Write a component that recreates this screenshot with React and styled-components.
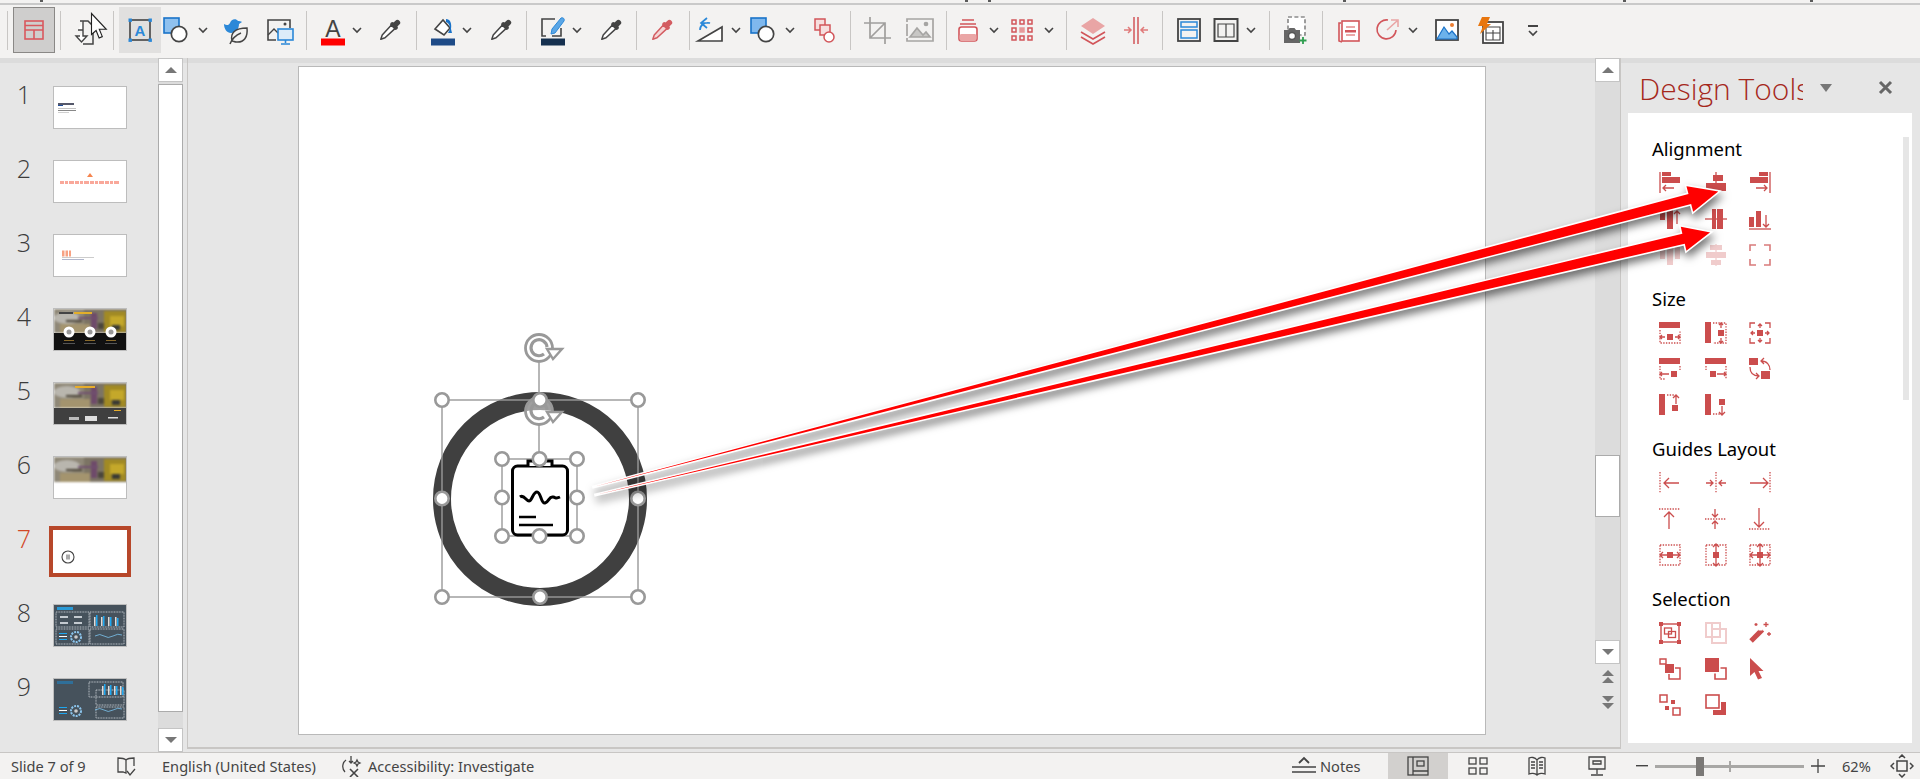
import React from "react";
import styled, { createGlobalStyle } from "styled-components";

const UI = `"Noto Sans", "Open Sans", "Liberation Sans", sans-serif`;

const Global = createGlobalStyle`
  html, body { margin: 0; padding: 0; background: #e6e6e6; }
  * { box-sizing: border-box; }
`;

const Page = styled.div`
  position: relative; width: 1920px; height: 779px; overflow: hidden;
  display: flex; flex-direction: column; font-family: ${UI}; background: #e6e6e6;
`;
const TopStrip = styled.div`
  flex: none; height: 5px; background: #f3f2f1; border-bottom: 2px solid #c9c9c9; display: flex; align-items: flex-start;
`;
const TopTick = styled.span`
  flex: none; width: 3px; height: 2px; background: #5a5a5a; margin-left: ${p => p.$ml}px;
`;
const Ribbon = styled.div`
  flex: none; height: 53px; padding: 2px 0 5px; background: #f3f2f1;
  display: flex; align-items: center;
`;
const ToolItem = styled.div`
  flex: none; width: ${p => p.$w}px; margin-left: ${p => p.$ml}px; height: 46px;
  display: flex; align-items: center; justify-content: center;
  background: ${p => (p.$state === "on" ? "#cfcecd" : p.$state === "hover" ? "#e1e0df" : "transparent")};
  border: ${p => (p.$state === "on" ? "1px solid #8a8886" : "none")};
`;
const ToolSep = styled.div`
  flex: none; width: 1px; margin-left: ${p => p.$ml}px; height: 39px; background: #c8c6c4;
`;
const Workspace = styled.div`
  flex: 1; min-height: 0; display: flex;
  background: linear-gradient(#dcdcdc 0 5px, #e6e6e6 5px);
`;
const ThumbPane = styled.div`
  flex: none; width: 158px; padding-top: 28px; display: flex; flex-direction: column;
`;
const ThumbRow = styled.div`
  flex: none; height: 74px; display: flex; align-items: flex-start;
`;
const ThumbNum = styled.div`
  width: 53px; padding-right: 5px; margin-top: -8px; text-align: center;
  font-family: "Open Sans", ${UI}; font-weight: 300; font-size: 25px; line-height: 33px;
  color: ${p => (p.$active ? "#d24726" : "#3c3c3c")};
`;
const ThumbBox = styled.div`
  width: 74px; height: 43px; background: #fff; overflow: hidden;
  border: ${p => (p.$active ? "none" : "1px solid #bdbdbd")};
  outline: ${p => (p.$active ? "4px solid #b7472a" : "none")};
  svg { display: block; width: 100%; height: 100%; }
`;
const ScrollCol = styled.div`
  flex: none; width: ${p => p.$w}px; display: flex; flex-direction: column; align-items: stretch;
`;
const ScrollTrack = styled.div`
  flex: 1; min-height: 0; background: #dcdcdc; display: flex; flex-direction: column;
  padding-top: ${p => p.$pad || 0}px;
`;
const ScrollBtn = styled.div`
  flex: none; height: 24px; background: #fff; border: 1px solid #c4c4c4;
  display: flex; align-items: center; justify-content: center;
`;
const ScrollThumb = styled.div`
  flex: none; height: ${p => p.$h}px; background: #fff; border: 1px solid #ababab;
`;
const PlainBtn = styled.div`
  flex: none; height: ${p => p.$h}px; display: flex; align-items: center; justify-content: center;
`;
const Tri = styled.span`
  width: 0; height: 0; border-left: 6px solid transparent; border-right: 6px solid transparent;
  ${p => (p.$down ? "border-top: 6px solid #777;" : "border-bottom: 6px solid #777;")}
`;
const Gutter = styled.div`flex: none; width: 4px;`;
const EditorFrame = styled.div`
  flex: none; width: 1434px; height: 691px; display: flex;
  border: 1px solid #c8c6c4; border-top: none; border-bottom-width: 2px;
`;
const SlideArea = styled.div`flex: 1; padding: 8px 0 0 110px;`;
const Slide = styled.div`
  position: relative; width: 1188px; height: 669px; background: #fff; border: 1px solid #b9b9b9;
`;
const SlideArt = styled.svg`position: absolute; left: -1px; top: -1px; width: 1188px; height: 669px;`;
const TaskPane = styled.div`
  flex: 1; min-width: 0; display: flex; flex-direction: column; padding: 0 8px 9px 7px;
`;
const TaskHeader = styled.div`
  flex: none; height: 55px; display: flex; align-items: center; padding-top: 7px;
`;
const TaskTitle = styled.div`
  flex: none; width: 175px; padding-left: 11px; overflow: hidden; white-space: nowrap;
  font-family: "Open Sans", ${UI}; font-weight: 300; font-size: 30px; line-height: 42px;
  color: #a5281c;
`;
const TitleMenu = styled.span`
  margin-left: 17px; margin-top: -3px; width: 0; height: 0; border-left: 6.5px solid transparent;
  border-right: 6.5px solid transparent; border-top: 8px solid #777;
`;
const CloseX = styled.svg`margin-left: 46px; margin-top: -3px; width: 15px; height: 15px;`;
const TaskBody = styled.div`
  position: relative; flex: 1; min-height: 0; background: #fff; overflow: hidden; padding: 22px 0 0 24px;
`;
const TaskScroll = styled.div`
  position: absolute; right: 3px; top: 24px; width: 6px; height: 263px; background: #e6e6e6;
`;
const SectionTitle = styled.div`
  font-size: 18.5px; line-height: 28px; color: #000; height: 28px;
`;
const ToolGrid = styled.div`
  display: grid; grid-template-columns: 46px 44px 22px; grid-auto-rows: 36px;
  margin: 9px 0 ${p => p.$mb}px 7px; height: ${p => p.$h}px;
`;
const PanelIcon = styled.svg`width: 22px; height: 22px; display: block; overflow: visible;`;
const StatusBar = styled.div`
  flex: none; height: 27px; background: #f3f2f1; border-top: 1px solid #c8c6c4;
  display: flex; align-items: center; color: #444; font-size: 14.6px; white-space: nowrap;
`;
const StatusText = styled.span`
  flex: none; width: ${p => p.$w}px; margin-left: ${p => p.$ml}px; line-height: 26px;
`;
const StatusIcon = styled.div`
  flex: none; width: ${p => p.$w}px; margin-left: ${p => p.$ml}px; height: 26px;
  display: flex; align-items: center; justify-content: center;
  background: ${p => (p.$on ? "#d2d0ce" : "transparent")};
`;
const ZoomTrack = styled.div`
  position: relative; flex: none; width: 149px; height: 3px; margin-left: ${p => p.$ml}px; background: #a8a7a5;
`;
const ZoomThumb = styled.div`
  position: absolute; left: 41px; top: -8px; width: 8px; height: 19px; background: #7a7876;
`;
const ZoomTick = styled.div`
  position: absolute; left: 74px; top: -4px; width: 2px; height: 11px; background: #a8a7a5;
`;
const ArrowLayer = styled.svg`
  position: absolute; left: 0; top: 0; width: 1920px; height: 779px; pointer-events: none;
  filter: drop-shadow(2px 5px 4px rgba(0,0,0,.55));
`;

/* ---------- ribbon icons ---------- */
const DK = "#444";
const BL = "#2b88d8";
const RD = "#d2555a";

const Dropper = ({ c = DK, fill = "#fff" }) => (
  <g transform="rotate(45 14 14)" stroke={c} strokeWidth="1.5" fill={fill} strokeLinejoin="round">
    <path d="M11.5 9.5h5L16 23l-2 4-2-4z" />
    <rect x="10.3" y="7" width="7.4" height="2.6" rx="1" fill={c} />
    <path d="M12 7V3.5a2 2 0 0 1 4 0V7" fill={c} />
  </g>
);
const ShapeIc = ({ light }) => (
  <g>
    <rect x="1" y="2" width="15" height="15" fill={light ? "#7fb8ee" : "#8fc1ef"} stroke="#1a73c9" strokeWidth="1.6" />
    <circle cx="16" cy="18" r="7.7" fill="#fff" stroke={DK} strokeWidth="1.7" />
  </g>
);
const ICONS = {
  layout: <g fill="none" stroke="#d9585e" strokeWidth="1.6"><rect x="5" y="5" width="18" height="18" /><path d="M5 9.5h18M5 14h18M14 14v9" /></g>,
  doc: (
    <g>
      <path d="M6 5h8l5 5v18H9" fill="none" stroke={DK} strokeWidth="1.5" />
      <path d="M4 14h5V5M9 14v6h4l-5.5 6L2 20h4" fill="#fff" stroke={DK} strokeWidth="1.4" />
      <path d="M17.5-2.5v21l4.6-4 3 7.5 3.2-1.4-3-7.3h7z" fill="#fff" stroke="#222" strokeWidth="1.1" />
    </g>
  ),
  textbox: (
    <g>
      <rect x="4" y="4" width="20" height="20" fill="none" stroke={DK} strokeWidth="1.6" />
      <text x="14" y="20" fontFamily="Liberation Sans" fontSize="15" fontWeight="700" textAnchor="middle" fill={BL}>A</text>
      {[[2.5, 2.5], [22.5, 2.5], [2.5, 22.5], [22.5, 22.5]].map(([x, y], i) => <rect key={i} x={x} y={y} width="3.4" height="3.4" fill={BL} />)}
    </g>
  ),
  shapes: <ShapeIc />,
  bird: (
    <g>
      <path d="M2 8c3 2 5 1 6-1 1-4 6-5 8-2 1 0 3 0 4 1l-3 2c0 5-3 9-8 9-4 0-7-4-7-9z" fill="#2b88d8" />
      <path d="M10 25c-2-8 3-13 15-13 1 9-3 15-11 14-1 0-3-1-4-1zM8 28c2-5 6-9 11-11" fill="#f3f2f1" stroke={DK} strokeWidth="1.5" />
    </g>
  ),
  imgscreen: (
    <g>
      <path d="M10 24H2V4h22v8" fill="none" stroke={DK} strokeWidth="1.6" />
      <path d="M2 19l6-6 4 4" fill="none" stroke={DK} strokeWidth="1.4" />
      <circle cx="19" cy="8" r="1.5" fill={DK} />
      <rect x="12" y="13" width="15" height="11" fill="#dcecf9" stroke={BL} strokeWidth="1.6" />
      <path d="M19.5 24v3M15 28h9" stroke={BL} strokeWidth="1.6" />
    </g>
  ),
  fontA: (
    <g>
      <text x="14" y="21" fontFamily="Liberation Sans" fontSize="23" textAnchor="middle" fill={DK}>A</text>
      <rect x="2" y="22.5" width="24" height="7" fill="#f00" />
    </g>
  ),
  drop: <Dropper />,
  fill: (
    <g>
      <path d="M6 13L14 4l7 8-6 7z" fill="#fff" stroke={DK} strokeWidth="1.6" />
      <path d="M17 3c4 0 6 4 5 10l1 4h-4l2-4c0-3-1-6-4-7z" fill="#1a73c9" />
      <rect x="2" y="22.5" width="24" height="7" fill="#1e4b87" />
    </g>
  ),
  outline: (
    <g>
      <path d="M16 3H3v17h4M13 20h9v-8" fill="none" stroke={DK} strokeWidth="1.6" />
      <path d="M12 18l1-5L22 2c2-1 4 1 3 3L16 17z" fill="#5aa6e6" stroke="#2b88d8" strokeWidth="1" />
      <rect x="2" y="22.5" width="24" height="7" fill="#15304f" />
    </g>
  ),
  dropRed: <g opacity=".95"><Dropper c="#d2555a" fill="#f6d5d5" /></g>,
  rotate: (
    <g>
      <path d="M2 25L26 11v14z" fill="#fff" stroke={DK} strokeWidth="1.7" />
      <path d="M4 15A8 7 0 0 1 14 8H6M11 3l-6 5 6 5" fill="none" stroke={BL} strokeWidth="1.7" transform="translate(0 -1)" />
    </g>
  ),
  shapes2: <ShapeIc light />,
  group: (
    <g fill="#f6dede" stroke={RD} strokeWidth="1.5">
      <rect x="4" y="3" width="10" height="11" />
      <rect x="9" y="9" width="10" height="10" />
      <circle cx="18" cy="21" r="5" fill="#fff" />
    </g>
  ),
  crop: <g fill="none" stroke="#a09f9d" strokeWidth="1.7"><path d="M7 1v21h21M1 7h21v21M22 7L7 22" /></g>,
  imgGray: (
    <g fill="none" stroke="#a6a5a3" strokeWidth="1.7">
      <path d="M1 6V3h26v22H1v-3M1 8v12M27 8v12" />
      <path d="M4 21l7-9 6 7 3-3 4 5z" fill="#c8c7c5" /><circle cx="20" cy="8" r="1.5" fill="#a6a5a3" />
    </g>
  ),
  stack: (
    <g>
      <path d="M8 4h12M6 8h16" stroke={RD} strokeWidth="1.6" />
      <rect x="5" y="11" width="18" height="14" rx="2.5" fill="#fff" stroke={RD} strokeWidth="1.6" />
      <rect x="5.5" y="18" width="17" height="7" rx="2" fill="#eaa6a6" />
    </g>
  ),
  grid: <g fill="none" stroke={RD} strokeWidth="1.5">{[6, 14, 22].flatMap(y => [5, 13, 21].map(x => <rect key={x + "-" + y} x={x - 2} y={y - 2} width="4" height="4" fill={x === 13 && y === 14 ? "#e79a9a" : "none"} stroke={x === 13 && y === 14 ? "#e79a9a" : RD} />))}</g>,
  layers: (
    <g>
      <path d="M14 2l12 8-12 8-12-8z" fill="#e9a5a5" />
      <path d="M2 16l12 7 12-7M2 21l12 7 12-7" fill="none" stroke={RD} strokeWidth="1.6" />
    </g>
  ),
  distrib: <g fill="none" stroke={RD} strokeWidth="1.5"><path d="M12 1v27M16 1v27" /><path d="M2 14h7m-3-3l3 3-3 3M26 14h-7m3-3l-3 3 3 3" stroke="#e07a7a" /></g>,
  layoutBlue: (
    <g fill="none">
      <rect x="3" y="3" width="22" height="22" stroke={DK} strokeWidth="1.8" />
      <rect x="6" y="6" width="16" height="5" stroke={BL} strokeWidth="1.5" />
      <rect x="6" y="14" width="16" height="8" stroke={BL} strokeWidth="1.5" />
    </g>
  ),
  layoutDark: (
    <g fill="none" stroke={DK}>
      <rect x="2.5" y="3" width="23" height="22" strokeWidth="2" />
      <path d="M6 8h16v13H6zM14 8v13" strokeWidth="1.2" />
    </g>
  ),
  camera: (
    <g>
      <rect x="6" y="1" width="17" height="18" fill="#fff" stroke="#8c8c8c" strokeWidth="1.7" strokeDasharray="4 2.4" />
      <path d="M2 14h4l1.5-2h5l1.5 2h4v13H2z" fill="#666" />
      <circle cx="10" cy="20" r="3.5" fill="#fff" stroke="#555" strokeWidth="1.4" />
      <path d="M21 21v7M17.5 24.5h7" stroke="#2e9e4f" strokeWidth="1.8" />
    </g>
  ),
  redDoc: (
    <g fill="none" stroke={RD} strokeWidth="1.6">
      <path d="M6 7H4v18l3 1" />
      <rect x="7" y="5" width="17" height="20" fill="#fff" />
      <path d="M11 11h9M11 19h9" stroke="#e58a8a" />
      <rect x="10" y="14" width="11" height="2.5" fill={RD} stroke="none" />
    </g>
  ),
  circArrow: (
    <g fill="none" strokeWidth="1.6">
      <path d="M15 4A9.5 9.5 0 1 0 23 14" stroke={RD} />
      <path d="M14 14L24 5M18 4h7v7" stroke="#e9a5a5" />
    </g>
  ),
  picture: (
    <g>
      <rect x="3" y="4" width="22" height="20" fill="#fff" stroke={DK} strokeWidth="1.8" />
      <path d="M4 23l7-12 5 7 3-3 5 6v2z" fill="#6cb2eb" stroke="#1a73c9" strokeWidth="1.2" />
      <circle cx="19" cy="9" r="2" fill="#ed7d31" />
    </g>
  ),
  lightning: (
    <g>
      <rect x="7" y="6" width="20" height="21" fill="#fff" stroke={DK} strokeWidth="1.8" />
      <path d="M10 11h14v13H10zM17 14v10M10 17h14" fill="none" stroke={DK} strokeWidth="1.1" />
      <path d="M6 1h8l-3 7h4L4 18l3-8H2z" fill="#e8760e" />
    </g>
  ),
  more: <g fill="none" stroke={DK} strokeWidth="1.7"><path d="M9 10h10" strokeWidth="2" /><path d="M10 15l4 4 4-4" /></g>,
};

const Ic = ({ name }) => (
  <svg width="28" height="28" viewBox="0 0 28 28" style={{ overflow: "visible" }}>{ICONS[name]}</svg>
);
const Chev = () => (
  <svg width="12" height="12" viewBox="0 0 12 12"><path d="M2 4l4 4 4-4" fill="none" stroke="#444" strokeWidth="1.6" /></svg>
);

const RIB = [
  ["sep", 7], ["layout", 34, 42, "on"], ["sep", 60], ["doc", 88], ["sep", 113], ["textbox", 140, 42, "hover"],
  ["shapes", 177], ["chev", 203], ["bird", 236], ["imgscreen", 280], ["sep", 306.5], ["fontA", 333], ["chev", 357],
  ["drop", 390], ["sep", 416], ["fill", 443], ["chev", 467], ["drop", 501], ["sep", 526.5], ["outline", 553], ["chev", 577],
  ["drop", 611], ["sep", 636], ["dropRed", 662], ["sep", 689], ["rotate", 710], ["chev", 736], ["shapes2", 764], ["chev", 790],
  ["group", 824.5], ["sep", 850], ["crop", 877], ["imgGray", 920], ["sep", 946.5], ["stack", 968], ["chev", 994], ["grid", 1023],
  ["chev", 1049], ["sep", 1066.5], ["layers", 1093], ["distrib", 1136], ["sep", 1162], ["layoutBlue", 1189], ["layoutDark", 1226],
  ["chev", 1251], ["sep", 1269], ["camera", 1296], ["sep", 1322], ["redDoc", 1349], ["circArrow", 1387], ["chev", 1413],
  ["picture", 1447], ["lightning", 1490], ["more", 1533],
];

const RibbonRow = () => {
  let prev = 0;
  return (
    <Ribbon>
      {RIB.map(([name, c, w0, state], i) => {
        const w = name === "sep" ? 1 : name === "chev" ? 12 : w0 || 28;
        const ml = c - w / 2 - prev;
        prev = c + w / 2;
        if (name === "sep") return <ToolSep key={i} $ml={ml} />;
        return (
          <ToolItem key={i} $w={w} $ml={ml} $state={state}>
            {name === "chev" ? <Chev /> : <Ic name={name} />}
          </ToolItem>
        );
      })}
    </Ribbon>
  );
};

/* ---------- thumbnails ---------- */
const Photo = ({ h = 27 }) => (
  <g style={{ filter: "blur(.8px)" }}>
    <rect width="74" height={h} fill="#7c7464" />
    <rect x="0" y="0" width="30" height={h} fill="#8f8878" />
    <ellipse cx="13" cy="9" rx="13" ry="6" fill="#b9b6ae" />
    <rect x="6" y={h - 9} width="30" height="9" fill="#a4946e" />
    <rect x="12" y={h - 13} width="16" height="2" fill="#4a4336" />
    <rect x="50" y="2" width="22" height={h - 3} fill="#a18a24" />
    <rect x="56" y="7" width="14" height="10" fill="#c4a82a" />
    <rect x="58" y={h - 8} width="8" height="5" fill="#3a3a34" />
    <rect x="37" y="4" width="6" height={h - 8} fill="#6e4a6a" />
    <rect x="24" y={h - 16} width="20" height="2" fill="#704f70" />
    <rect x="44" y={h - 10} width="6" height="6" fill="#4b463c" />
  </g>
);
const Thumb = ({ n }) => {
  const blur = { filter: "blur(.3px)" };
  if (n === 1) return <svg viewBox="0 0 72 41"><g style={blur}><rect x="4" y="16" width="16" height="2" fill="#55586a" /><rect x="4" y="18" width="5" height="1" fill="#1f4e9c" /><rect x="4" y="21" width="18" height="1" fill="#c4c4c4" /><rect x="4" y="23" width="18" height="1" fill="#888" /><rect x="4" y="25" width="11" height="1" fill="#d0d0d0" /></g></svg>;
  if (n === 2) return <svg viewBox="0 0 72 41"><g style={blur}><path d="M36 12l3 4h-6z" fill="#f6854f" /><path d="M6 21.5H65" stroke="#f9a89a" strokeWidth="3" strokeDasharray="4 1 3 1 5 1" /></g></svg>;
  if (n === 3) return <svg viewBox="0 0 72 41"><g style={blur}><path d="M8 18.5h9" stroke="#f7a283" strokeWidth="6" strokeDasharray="2.5 1" /><rect x="8" y="22" width="32" height="1" fill="#ccc" /><rect x="8" y="24" width="22" height="1" fill="#b0b6cc" /></g></svg>;
  if (n === 4) return (
    <svg viewBox="0 0 72 41">
      <Photo h={24} />
      <rect y="24" width="72" height="17" fill="#111" />
      <rect x="5" y="3" width="14" height="2" fill="#444" /><rect x="20" y="3" width="18" height="2" fill="#e3ae2a" />
      {[15, 36, 57].map(x => <g key={x}><circle cx={x} cy="23" r="5.5" fill="#fff" /><circle cx={x} cy="23" r="2.5" fill="#999" /><rect x={x - 5} y="31" width="10" height="1" fill="#8a6a2a" /><rect x={x - 6} y="34" width="12" height="1" fill="#555" /></g>)}
    </svg>
  );
  if (n === 5) return (
    <svg viewBox="0 0 72 41">
      <Photo h={25} />
      <rect y="25" width="72" height="16" fill="#3f3f3f" />
      <rect x="21" y="3" width="20" height="2" fill="#e7ad2b" />
      <rect x="15" y="34" width="10" height="3" fill="#bbb" /><rect x="31" y="33" width="12" height="5" fill="#ddd" /><rect x="54" y="34" width="10" height="1.5" fill="#ddd" /><rect x="60" y="27" width="7" height="1" fill="#e7ad2b" />
    </svg>
  );
  if (n === 6) return <svg viewBox="0 0 72 41"><Photo h={25} /></svg>;
  if (n === 7) return (
    <svg viewBox="0 0 74 43"><circle cx="15" cy="27" r="6" fill="#fff" stroke="#444" strokeWidth="1.1" /><rect x="13" y="24.5" width="4" height="5" fill="#aaa" /></svg>
  );
  return (
    <svg viewBox="0 0 72 41">
      <rect width="72" height="41" fill="#46525c" />
      <rect x="3" y="2" width="16" height="3" fill={n === 8 ? "#2a9ad6" : "#2f6f99"} />
      <g fill="none" stroke="#c4cad0" strokeWidth=".9" strokeDasharray="1 .6">
        {n === 8 ? <><rect x="2" y="7" width="33" height="15" /><rect x="36" y="7" width="34" height="15" /><rect x="2" y="24" width="33" height="15" /><rect x="36" y="24" width="34" height="15" /></>
          : <><rect x="35" y="3" width="34" height="15" /><rect x="42" y="11" width="28" height="15" /><rect x="42" y="28" width="28" height="11" /></>}
      </g>
      {n === 8 && [6, 20].flatMap(x => [11, 17].map(y => <rect key={x + "-" + y} x={x} y={y} width="8" height="2" fill="#c4cad0" />))}
      {(n === 8 ? [40, 47, 54, 61] : [48, 54, 60, 66]).map((x, i) => <g key={x}><rect x={x} y={n === 8 ? 12 : 7} width="1.5" height={9} fill="#ddd" /><rect x={x + 2} y={n === 8 ? 10 + i : 5 + i} width="1.5" height={11 - i} fill="#1ea7f0" /></g>)}
      <circle cx="22" cy="32" r="5" fill="none" stroke="#8cc6ee" strokeWidth="2" strokeDasharray="2 1" />
      <circle cx="22" cy="32" r="1.8" fill="#ccc" />
      <rect x="5" y="28" width="8" height="1" fill="#1ea7f0" /><rect x="5" y="31" width="8" height="1" fill="#fff" /><rect x="5" y="34" width="8" height="1" fill="#1ea7f0" />
      <path d="M41 31q5-3 9 0t9 0 9-1" fill="none" stroke="#7bc4ef" strokeWidth=".8" />
    </svg>
  );
};

/* ---------- task-pane icons ---------- */
const C = "#cb4d4d";
const B = ({ x, y, w, h }) => <rect x={x} y={y} width={w} height={h} fill={C} />;
const L = ({ d, sw = 1.3 }) => <path d={d} fill="none" stroke={C} strokeWidth={sw} />;
const D = ({ d }) => <path d={d} fill="none" stroke={C} strokeWidth="1.3" strokeDasharray="1.4 1.3" />;
const box = "M1 1H21V21H1Z";

const PANEL = {
  alignL: <><L d="M1 0V21" /><B x={3} y={0} w={9} h={4} /><B x={3} y={5} w={18} h={6} /><L d="M15 16H4m3-3l-3 3 3 3" /></>,
  alignC: <><L d="M11 0V21" /><B x={8} y={3} w={10} h={6} /><B x={1} y={11} w={20} h={8} /></>,
  alignR: <><L d="M21 0V21" /><B x={10} y={0} w={9} h={4} /><B x={1} y={5} w={18} h={6} /><L d="M7 16H18m-3-3l3 3-3 3" /></>,
  alignT: <><L d="M0 1H16" /><B x={1} y={2} w={5} h={10} /><B x={8} y={2} w={6} h={19} /><L d="M18 16V3m-3 3l3-3 3 3" /></>,
  alignM: <><L d="M0 11H22" /><B x={7} y={1} w={4} h={20} /><B x={12} y={1} w={6} h={20} /></>,
  alignB: <><L d="M0 21H22" /><B x={0} y={9} w={5} h={10} /><B x={7} y={3} w={5} h={16} /><L d="M17 7V19m-3-3 3 3 3-3" /></>,
  distH: <g opacity=".28"><L d="M0 1H22" /><B x={1} y={3} w={5} h={12} /><B x={8} y={3} w={6} h={18} /><B x={16} y={3} w={5} h={12} /></g>,
  distV: <g opacity=".28"><L d="M11 0V22" /><B x={5} y={1} w={12} h={5} /><B x={1} y={8} w={20} h={6} /><B x={6} y={16} w={10} h={5} /></g>,
  focus: <g opacity=".75"><L d="M1 7V1H7M15 1H21V7M21 15V21H15M7 21H1V15" sw={1.6} /></g>,
  s1: <><B x={0} y={0} w={21} h={6} /><D d="M1 8V21H21V8" /><B x={8} y={12} w={6} h={6} /><L d="M6 15H1m2-2-2 2 2 2M16 15H21m-2-2 2 2-2 2" /></>,
  s2: <><B x={0} y={0} w={6} h={21} /><D d="M8 1H21V21H8" /><B x={13} y={8} w={6} h={6} /><L d="M16 6V1m-2 2 2-2 2 2M16 16V21m-2-2 2 2 2-2" /></>,
  s3: <><L d="M1 6V1H6M16 1H21V6M21 16V21H16M6 21H1V16" /><B x={8} y={8} w={6} h={6} /><L d="M6 11H2m2-2-2 2 2 2M16 11H20m-2-2 2 2-2 2M11 6V2m-2 2 2-2 2 2M11 16V20m-2-2 2 2 2-2" /></>,
  s4: <><B x={0} y={0} w={21} h={6} /><D d="M1 8V21H6M21 8V12" /><B x={12} y={13} w={6} h={6} /><L d="M10 16H1m2-2-2 2 2 2" /></>,
  s5: <><B x={0} y={0} w={21} h={6} /><D d="M21 8V21M1 8V12" /><B x={5} y={13} w={6} h={6} /><L d="M12 16H21m-2-2 2 2-2 2" /></>,
  s6: <><B x={0} y={0} w={9} h={7} /><B x={12} y={13} w={9} h={8} /><L d="M21 12C21 7 18 3 12 3m3-3-3 3 3 3" /><L d="M1 9C1 15 4 18 10 18m-3-3 3 3-3 3" /></>,
  s7: <><B x={0} y={0} w={6} h={21} /><D d="M8 1H15" /><L d="M17 10V1m-3 3 3-3 3 3" /><B x={13} y={11} w={6} h={6} /></>,
  s8: <><B x={0} y={0} w={6} h={21} /><D d="M8 20H15" /><B x={14} y={5} w={6} h={6} /><L d="M17 12V21m-3-3 3 3 3-3" /></>,
  g1: <><D d="M1 0V21" /><L d="M20 11H5m5-5-5 5 5 5" /></>,
  g2: <><D d="M11 0V21" /><L d="M1 11H8m-3-3 3 3-3 3M21 11H14m3-3-3 3 3 3" /></>,
  g3: <><D d="M21 0V21" /><L d="M1 11H19m-5-5 5 5-5 5" /></>,
  g4: <><D d="M0 1H21" /><L d="M10 21V4m-5 5 5-5 5 5" /></>,
  g5: <><D d="M0 11H21" /><L d="M10 1V9m-3-3 3 3 3-3M10 21V13m-3 3 3-3 3 3" /></>,
  g6: <><D d="M0 21H21" /><L d="M10 0V19m-5-5 5 5 5-5" /></>,
  g7: <><D d={box} /><B x={8} y={8} w={6} h={6} /><L d="M1 11H21m-3-3 3 3-3 3M4 8l-3 3 3 3" /></>,
  g8: <><D d={box} /><B x={8} y={8} w={6} h={6} /><L d="M11 0V22m-3-3 3 3 3-3M8 3l3-3 3 3" /></>,
  g9: <><D d={box} /><B x={8} y={8} w={6} h={6} /><L d="M1 11H21m-3-3 3 3-3 3M4 8l-3 3 3 3M11 0V22m-3-3 3 3 3-3M8 3l3-3 3 3" /></>,
  sel1: <><rect x="2" y="2" width="18" height="18" fill="none" stroke={C} strokeWidth="1.4" /><B x={0} y={0} w={4} h={4} /><B x={18} y={0} w={4} h={4} /><B x={0} y={18} w={4} h={4} /><B x={18} y={18} w={4} h={4} /><rect x="5.5" y="6" width="7" height="6" fill="none" stroke={C} strokeWidth="1.3" /><rect x="9.5" y="9.5" width="7" height="6" fill="none" stroke={C} strokeWidth="1.3" /></>,
  sel2: <g opacity=".28"><L d="M1 1H15V15H1ZM7 7H21V21H7Z" sw={2} /><L d="M7 1V20" sw={2} /></g>,
  sel3: <><g transform="rotate(45 7 14)"><B x={4.5} y={5} w={5} h={16} /></g><rect x="9.5" y="5.5" width="4" height="3" fill="#fff" /><L d="M17 0v5M14.5 2.5h5M20 10v4M18 12h4M7 1v3M5.5 2.5h3" /></>,
  sel4: <><L d="M1 1H7V6H1Z" sw={1.4} /><B x={6} y={6} w={9} h={9} /><L d="M16 10H21V21H10V16" sw={1.5} /></>,
  sel5: <><B x={0} y={0} w={14} h={14} /><L d="M15.5 10H21V21H10V15.5" sw={1.6} /></>,
  sel6: <path d="M1 0V18L5.5 14L9 21.5L13 20L9.5 13H14.5Z" fill={C} />,
  sel7: <><rect x="1" y="1" width="7" height="7" fill="none" stroke={C} strokeWidth="1.5" /><rect x="14" y="14" width="7" height="7" fill="none" stroke={C} strokeWidth="1.5" /><B x={12} y={6} w={4} h={4} /><B x={6} y={12} w={4} h={4} /></>,
  sel8: <><rect x="1" y="1" width="13" height="13" fill="none" stroke={C} strokeWidth="1.6" /><path d="M16 8H21V21H8V16H16Z" fill={C} /></>,
};

const Section = ({ title, icons, mb, h }) => (
  <>
    <SectionTitle>{title}</SectionTitle>
    <ToolGrid $mb={mb} $h={h}>
      {icons.map(n => <PanelIcon key={n} viewBox="0 0 22 22">{PANEL[n]}</PanelIcon>)}
    </ToolGrid>
  </>
);

/* ---------- slide art ---------- */
const Handle = ({ x, y }) => <circle cx={x} cy={y} r="6.7" fill="#fff" stroke="#999" strokeWidth="2.6" />;
const Rot = ({ x, y }) => (
  <g fill="none" stroke="#999">
    <circle cx={x} cy={y} r="13.5" strokeWidth="2.8" fill="#fff" fillOpacity=".5" />
    <path d={`M${x + 5} ${y + 6}A8 8 0 1 1 ${x + 8} ${y - 1}`} strokeWidth="3.2" />
    <path d={`M${x + 8} ${y + 1}h15l-9 10z`} fill="#fff" strokeWidth="2.4" />
  </g>
);
const handles = (x1, y1, x2, y2) => {
  const mx = (x1 + x2) / 2, my = (y1 + y2) / 2;
  return [[x1, y1], [mx, y1], [x2, y1], [x1, my], [x2, my], [x1, y2], [mx, y2], [x2, y2]];
};
/* page coords → slide coords */
const ox = 298, oy = 66;

const SlideDrawing = () => (
  <SlideArt viewBox={`${ox} ${oy} 1188 669`}>
    <circle cx="540" cy="499" r="98" fill="none" stroke="#404040" strokeWidth="18" />
    <path d="M539 363V400" stroke="#999" strokeWidth="1.4" />
    <rect x="442" y="400" width="196" height="197" fill="none" stroke="#999" strokeWidth="1.4" />
    <Rot x={539} y={348} />
    <Rot x={539} y={411} />
    <path d="M539 424V459" stroke="#999" strokeWidth="1.4" />
    <rect x="502" y="459" width="75" height="77" fill="none" stroke="#999" strokeWidth="1.4" />
    <g fill="none" stroke="#000">
      <rect x="512.5" y="466" width="55" height="69" rx="5" strokeWidth="3" />
      <path d="M528 466v-5h24v5" strokeWidth="3" fill="#fff" />
      <path d="M520 497c4-3 6 4 9 4s4-9 8-9 4 12 8 11 4-7 8-6 3 2 7 0" strokeWidth="3" />
      <path d="M519 517h17M519 525h34" strokeWidth="2.4" />
    </g>
    {handles(442, 400, 638, 597).map(([x, y], i) => <Handle key={i} x={x} y={y} />)}
    {handles(502, 459, 577, 536).map(([x, y], i) => <Handle key={"i" + i} x={x} y={y} />)}
  </SlideArt>
);

const arrowPoints = (t, h, tw, sw, hw, hl) => {
  const dx = h[0] - t[0], dy = h[1] - t[1], len = Math.hypot(dx, dy);
  const ux = dx / len, uy = dy / len, nx = -uy, ny = ux;
  const b = [h[0] - ux * hl, h[1] - uy * hl];
  const pt = (p, k) => `${p[0] + nx * k},${p[1] + ny * k}`;
  return [pt(t, tw / 2), pt(b, sw / 2), pt(b, hw / 2), pt(h, 0), pt(b, -hw / 2), pt(b, -sw / 2), pt(t, -tw / 2)].join(" ");
};

const BigArrows = () => (
  <ArrowLayer viewBox="0 0 1920 779">
    <g fill="#ff0000" stroke="#fff" strokeWidth="1.6" strokeLinejoin="miter">
      <polygon points={arrowPoints([593, 487], [1720, 191], 1.5, 12, 29, 32)} />
      <polygon points={arrowPoints([595, 495], [1712, 232], 1.5, 12, 27, 30)} />
    </g>
  </ArrowLayer>
);

const StatusSvg = ({ w = 22, h = 22, children }) => (
  <svg width={w} height={h} viewBox={`0 0 ${w} ${h}`} fill="none" stroke="#444" strokeWidth="1.3">{children}</svg>
);

export default function App() {
  return (
    <Page>
      <Global />
      <TopStrip>
        <TopTick $ml={40} /><TopTick $ml={922} /><TopTick $ml={20} /><TopTick $ml={352} /><TopTick $ml={277} /><TopTick $ml={184} />
      </TopStrip>
      <RibbonRow />
      <Workspace>
        <ThumbPane>
          {[1, 2, 3, 4, 5, 6, 7, 8, 9].map(n => (
            <ThumbRow key={n}>
              <ThumbNum $active={n === 7}>{n}</ThumbNum>
              <ThumbBox $active={n === 7}><Thumb n={n} /></ThumbBox>
            </ThumbRow>
          ))}
        </ThumbPane>
        <ScrollCol $w={25}>
          <ScrollBtn><Tri /></ScrollBtn>
          <ScrollTrack $pad={2}><ScrollThumb $h={628} /></ScrollTrack>
          <ScrollBtn><Tri $down /></ScrollBtn>
        </ScrollCol>
        <Gutter />
        <EditorFrame>
          <SlideArea>
            <Slide><SlideDrawing /></Slide>
          </SlideArea>
          <ScrollCol $w={25}>
            <ScrollBtn><Tri /></ScrollBtn>
            <ScrollTrack $pad={373}><ScrollThumb $h={62} /></ScrollTrack>
            <ScrollBtn><Tri $down /></ScrollBtn>
            <PlainBtn $h={26}>
              <svg width="14" height="14" viewBox="0 0 14 14" fill="#777"><path d="M7 0l6 6H1zM7 7l6 6H1z" /></svg>
            </PlainBtn>
            <PlainBtn $h={26}>
              <svg width="14" height="14" viewBox="0 0 14 14" fill="#777"><path d="M1 0h12L7 6zM1 7h12l-6 6z" /></svg>
            </PlainBtn>
            <PlainBtn $h={31} />
          </ScrollCol>
        </EditorFrame>
        <TaskPane>
          <TaskHeader>
            <TaskTitle>Design Tools</TaskTitle>
            <TitleMenu />
            <CloseX viewBox="0 0 15 15"><path d="M2 2l11 11M13 2L2 13" stroke="#666" strokeWidth="3" /></CloseX>
          </TaskHeader>
          <TaskBody>
            <TaskScroll />
            <Section title="Alignment" mb={5} h={108} icons={["alignL", "alignC", "alignR", "alignT", "alignM", "alignB", "distH", "distV", "focus"]} />
            <Section title="Size" mb={5} h={108} icons={["s1", "s2", "s3", "s4", "s5", "s6", "s7", "s8"]} />
            <Section title="Guides Layout" mb={5} h={108} icons={["g1", "g2", "g3", "g4", "g5", "g6", "g7", "g8", "g9"]} />
            <Section title="Selection" mb={5} h={108} icons={["sel1", "sel2", "sel3", "sel4", "sel5", "sel6", "sel7", "sel8"]} />
            <SectionTitle>Vectors</SectionTitle>
          </TaskBody>
        </TaskPane>
      </Workspace>
      <StatusBar>
        <StatusText $ml={11} $w={89}>Slide 7 of 9</StatusText>
        <StatusIcon $ml={15} $w={22}>
          <StatusSvg><path d="M11 5C9 3 6 3 3 3v14h5l3 1V5c2-2 5-2 8-2v8M11 18" /><path d="M12 16l3 4 5-6" /></StatusSvg>
        </StatusIcon>
        <StatusText $ml={25} $w={170}>English (United States)</StatusText>
        <StatusIcon $ml={7} $w={24}>
          <StatusSvg w={24}><path d="M7 5a8 8 0 0 0-1 12M12 1v7m-2-2 2 2 2-2M17 7l1-2 1 2 2 1-2 1-1 2-1-2-2-1z" /><path d="M11 14l8 8M19 14l-8 8" strokeWidth="1.6" /></StatusSvg>
        </StatusIcon>
        <StatusText $ml={5} $w={180}>Accessibility: Investigate</StatusText>
        <StatusIcon $ml={742} $w={28}>
          <StatusSvg w={28}><path d="M9 8l5-5 5 5" strokeWidth="1.8" /><path d="M2 12h24M2 17h24M2 25h24" strokeWidth="1.4" /></StatusSvg>
        </StatusIcon>
        <StatusText $ml={2} $w={68}>Notes</StatusText>
        <StatusIcon $on $w={60} $ml={0}>
          <StatusSvg><rect x="1" y="2" width="20" height="18" /><path d="M6 2v18M6 16h15" /><rect x="10" y="6" width="7" height="5" /></StatusSvg>
        </StatusIcon>
        <StatusIcon $w={22} $ml={19}>
          <StatusSvg><rect x="2" y="3" width="7" height="6" /><rect x="13" y="3" width="7" height="6" /><rect x="2" y="13" width="7" height="6" /><rect x="13" y="13" width="7" height="6" /></StatusSvg>
        </StatusIcon>
        <StatusIcon $w={22} $ml={37}>
          <StatusSvg><path d="M11 5C9 2 5 2 3 3v16c2-1 6-1 8 1 2-2 6-2 8-1V3c-2-1-6-1-8 2zM11 5v15M5 7h4M5 10h4M5 13h4M13 7h4M13 10h4M13 13h4" /></StatusSvg>
        </StatusIcon>
        <StatusIcon $w={22} $ml={38}>
          <StatusSvg><path d="M3 2h16v12H3zM11 14v5M5 20h12M7 6h8v3H7z" /></StatusSvg>
        </StatusIcon>
        <StatusIcon $w={12} $ml={28}>
          <svg width="12" height="2" viewBox="0 0 12 2"><rect width="12" height="1.4" fill="#444" /></svg>
        </StatusIcon>
        <ZoomTrack $ml={7}><ZoomThumb /><ZoomTick /></ZoomTrack>
        <StatusIcon $w={14} $ml={7}>
          <svg width="14" height="14" viewBox="0 0 14 14"><path d="M7 0v14M0 7h14" stroke="#444" strokeWidth="1.3" /></svg>
        </StatusIcon>
        <StatusText $ml={17} $w={40}>62%</StatusText>
        <StatusIcon $w={24} $ml={8}>
          <StatusSvg w={24} h={24}><rect x="7" y="7" width="10" height="10" strokeWidth="1.5" /><path d="M9 4l3-3 3 3M9 20l3 3 3-3M4 9l-3 3 3 3M20 9l3 3-3 3" strokeWidth="1.5" /></StatusSvg>
        </StatusIcon>
      </StatusBar>
      <BigArrows />
    </Page>
  );
}
